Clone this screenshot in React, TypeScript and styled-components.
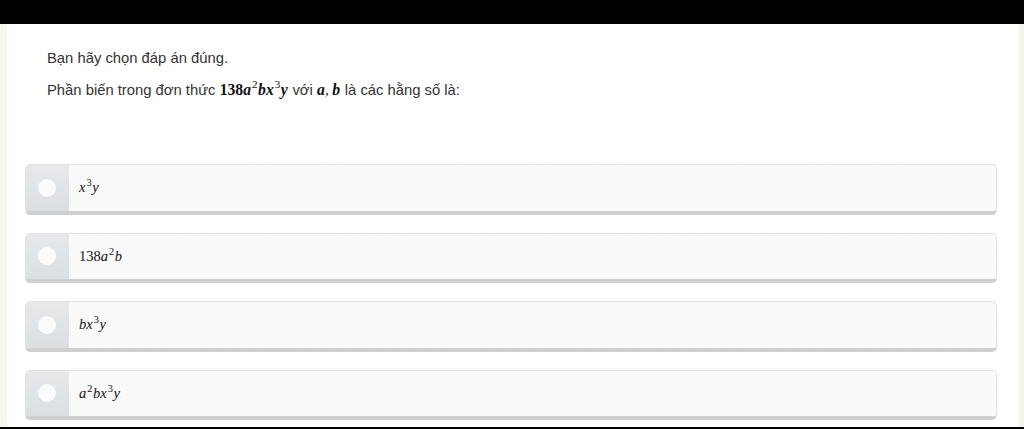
import React from "react";
import styled, { createGlobalStyle } from "styled-components";

const Global = createGlobalStyle`
  html, body { margin: 0; padding: 0; background: #fff; }
  body { font-family: "Liberation Sans", Arial, sans-serif; }
`;

const Frame = styled.div`
  width: 1024px;
  height: 429px;
  display: flex;
  flex-direction: column;
  overflow: hidden;
  background: #000;
`;

const TopBar = styled.div`
  height: 24px;
  background: #000;
  flex: none;
`;

const Page = styled.div`
  flex: 1;
  display: flex;
  background: #fff;
  border-left: 7px solid #f8f8f0;
  border-right: 5px solid #f3f3e8;
  margin-bottom: 2px;
  overflow: hidden;
`;

const Content = styled.div`
  flex: 1;
  display: flex;
  flex-direction: column;
  padding: 0 22px 0 18px;
`;

const Question = styled.div`
  padding: 24px 0 0 22px;
  color: #333;
  font-size: 14.8px;
`;

const Line = styled.p`
  margin: 0 0 12px;
  line-height: 20px;
`;

const M = styled.span<{ $size?: number }>`
  font-family: "Liberation Serif", "DejaVu Serif", serif;
  font-size: ${(p) => p.$size ?? 14}px;
  color: #111;
`;

const I = styled.i<{ $bold?: boolean }>`
  font-family: "Liberation Serif", "DejaVu Serif", serif;
  font-style: italic;
  font-size: 1.12em;
  font-weight: ${(p) => (p.$bold ? 700 : 400)};
  padding-right: 0.5px;
`;

const Num = styled.span<{ $bold?: boolean }>`
  font-family: "Liberation Serif", serif;
  font-size: 1.12em;
  font-weight: ${(p) => (p.$bold ? 700 : 400)};
`;

const Sup = styled.sup`
  font-family: "Liberation Serif", serif;
  font-size: 0.8em;
  line-height: 0;
  vertical-align: 0.6em;
  margin: 0 0.5px;
`;

const Options = styled.div`
  display: flex;
  flex-direction: column;
  gap: 18px;
  margin-top: 51px;
`;

const Option = styled.div`
  height: 45.5px;
  flex: none;
  display: flex;
  align-items: stretch;
  border: 1px solid #e2e2e2;
  border-bottom: 4px solid #cfcfcf;
  border-radius: 5px;
  overflow: hidden;
  background: repeating-linear-gradient(
    45deg,
    #fbfbfb 0px,
    #fbfbfb 2px,
    #f8f8f8 2px,
    #f8f8f8 3px
  );
`;

const Radio = styled.div`
  width: 43px;
  flex: none;
  display: flex;
  align-items: center;
  justify-content: center;
  padding-right: 2px;
  box-sizing: border-box;
  background: linear-gradient(#e6e8ea, #dcdfe2);
  box-shadow: 0 4px 0 #b3b3b3;
`;

const Dot = styled.div`
  width: 18px;
  height: 18px;
  border-radius: 50%;
  background: #fbfbfb;
`;

const Label = styled.div`
  display: flex;
  align-items: center;
  padding-left: 10px;
  color: #222;
`;

const options: React.ReactNode[] = [
  <>
    <I>x</I>
    <Sup>3</Sup>
    <I>y</I>
  </>,
  <>
    <Num>138</Num>
    <I>a</I>
    <Sup>2</Sup>
    <I>b</I>
  </>,
  <>
    <I>bx</I>
    <Sup>3</Sup>
    <I>y</I>
  </>,
  <>
    <I>a</I>
    <Sup>2</Sup>
    <I>bx</I>
    <Sup>3</Sup>
    <I>y</I>
  </>,
];

export default function App() {
  return (
    <>
      <Global />
      <Frame>
        <TopBar />
        <Page>
          <Content>
            <Question>
              <Line>Bạn hãy chọn đáp án đúng.</Line>
              <Line>
                Phần biến trong đơn thức{" "}
                <M>
                  <Num $bold>138</Num>
                  <I $bold>a</I>
                  <Sup>2</Sup>
                  <I $bold>bx</I>
                  <Sup>3</Sup>
                  <I $bold>y</I>
                </M>{" "}
                với{" "}
                <M>
                  <I $bold>a</I>, <I $bold>b</I>
                </M>{" "}
                là các hằng số là:
              </Line>
            </Question>
            <Options>
              {options.map((o, i) => (
                <Option key={i}>
                  <Radio>
                    <Dot />
                  </Radio>
                  <Label>
                    <M $size={13}>{o}</M>
                  </Label>
                </Option>
              ))}
            </Options>
          </Content>
        </Page>
      </Frame>
    </>
  );
}
